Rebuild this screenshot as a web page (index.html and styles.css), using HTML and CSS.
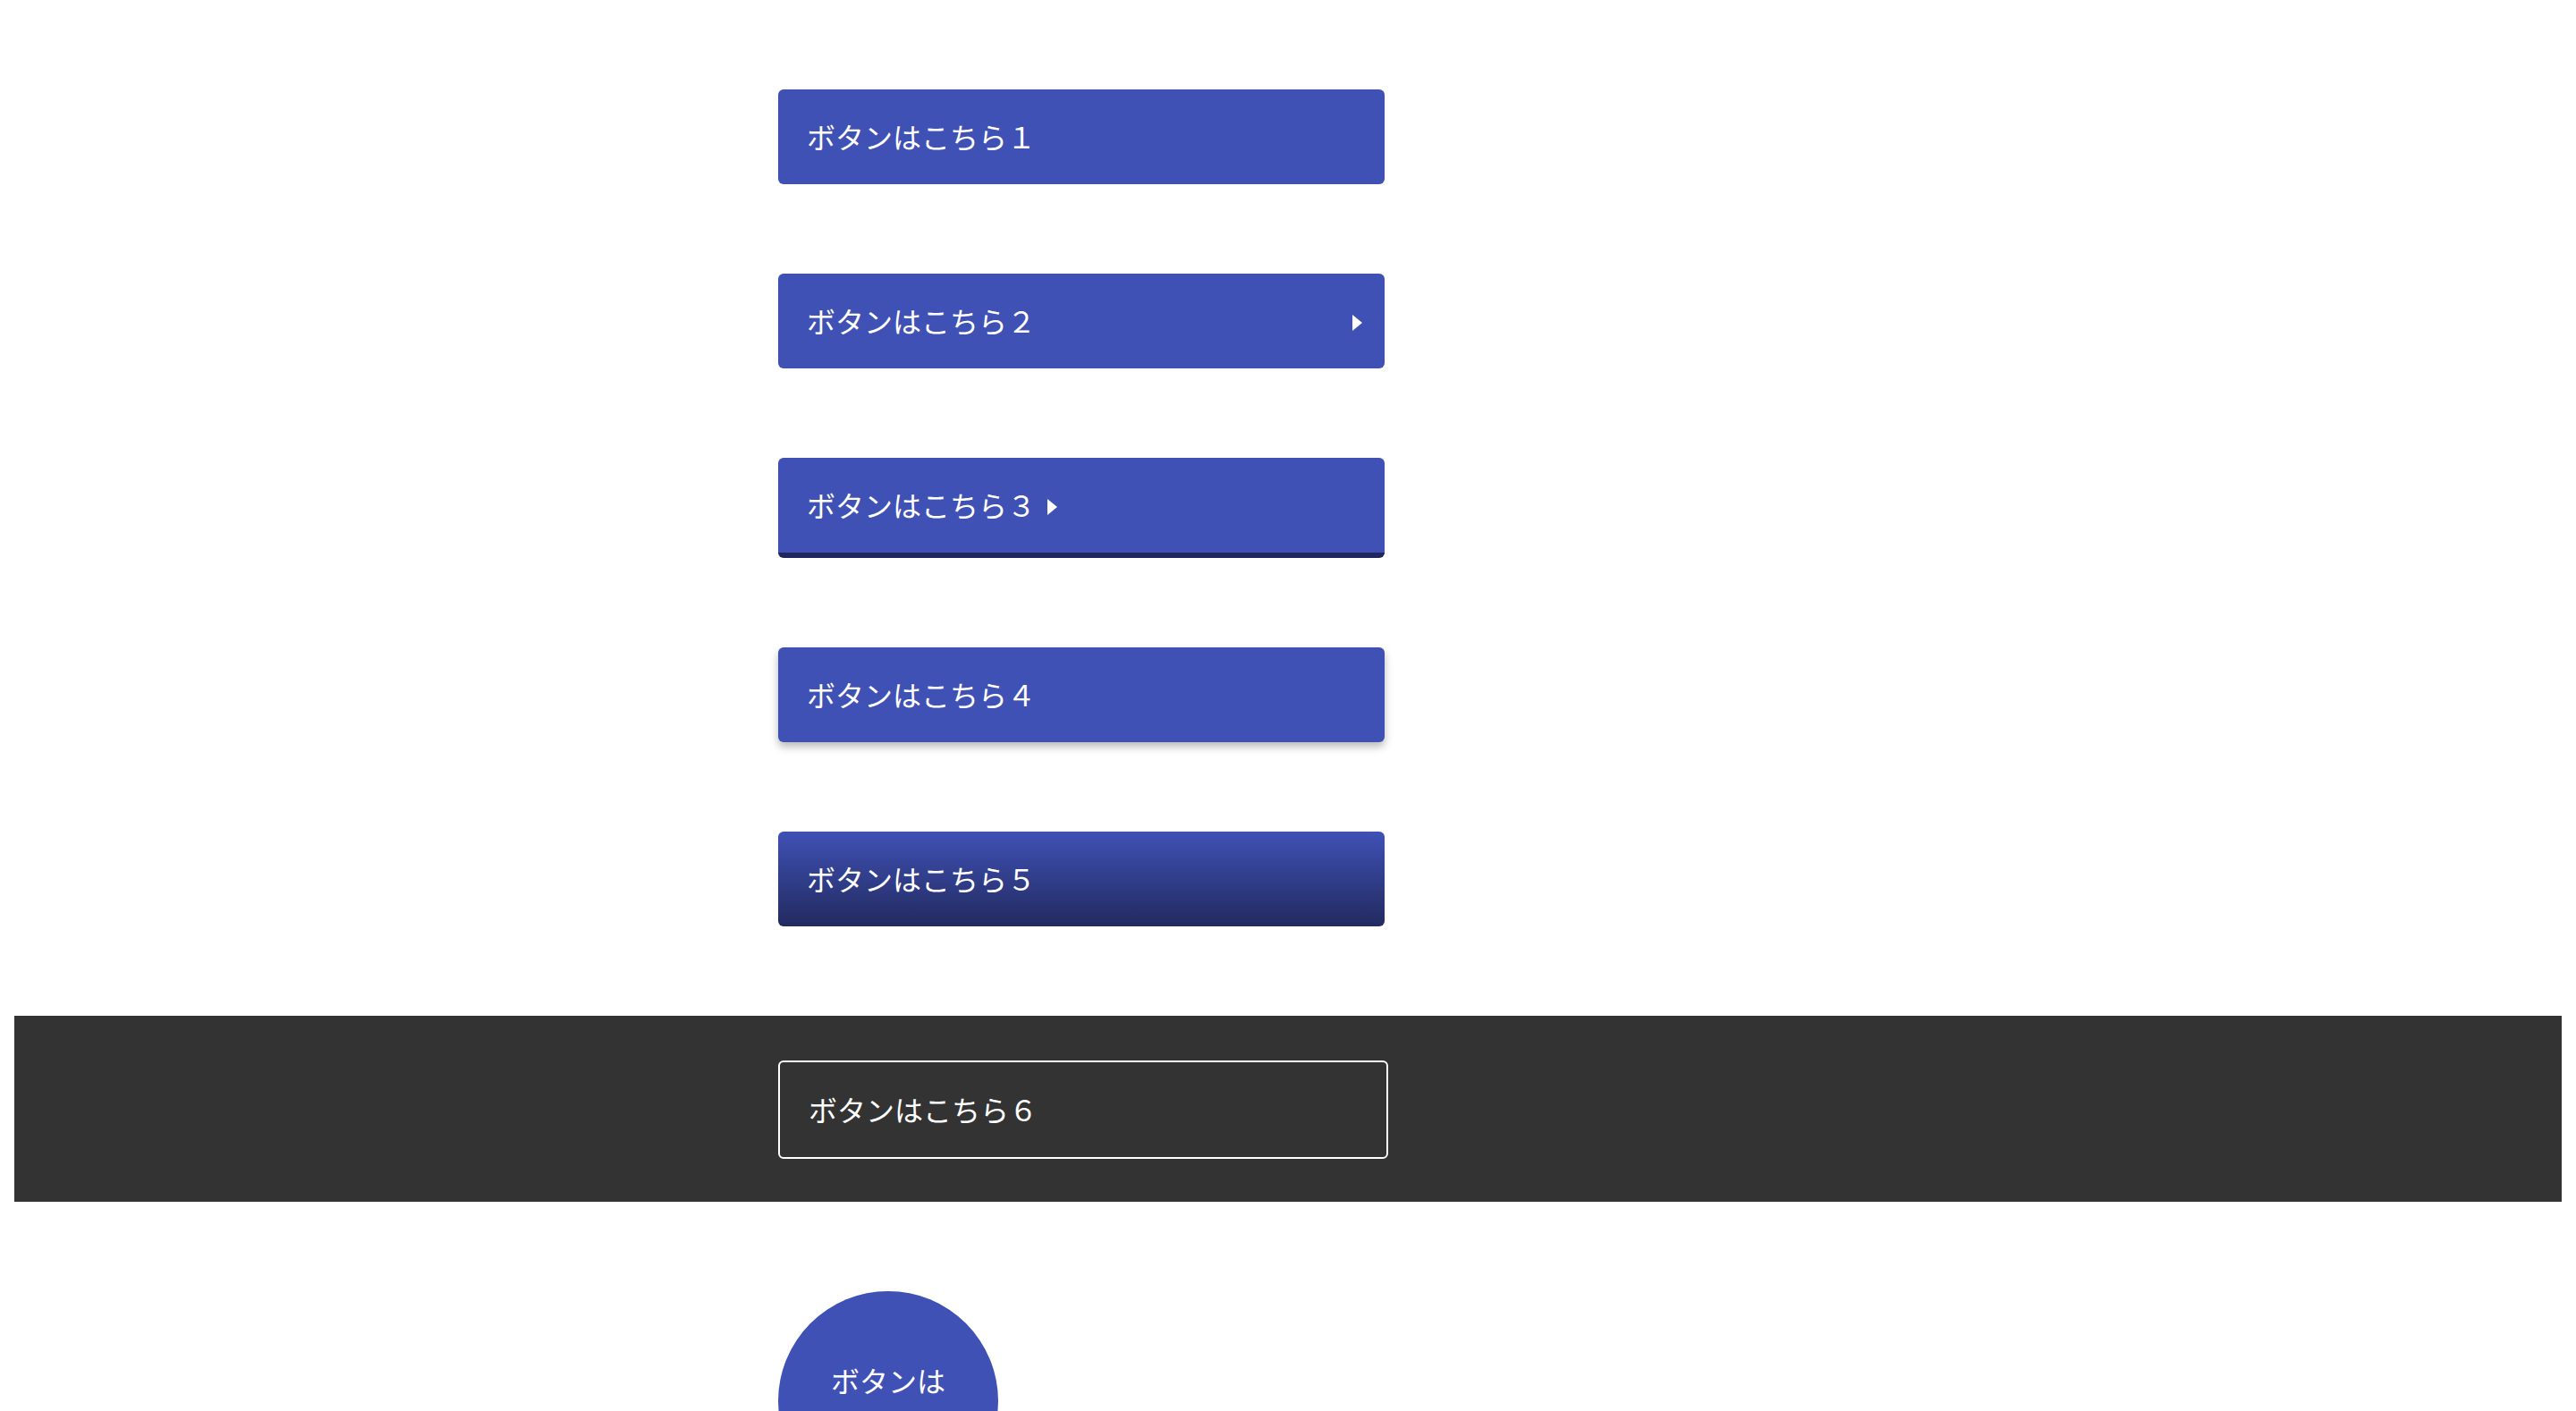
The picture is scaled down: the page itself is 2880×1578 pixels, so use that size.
FILE: index.html
```html
<!DOCTYPE html>
<html lang="ja">
<head>
<meta charset="utf-8">
<title>ボタン</title>
<link rel="stylesheet" href="styles.css">
</head>
<body>
<main class="page">
  <div class="row"><a class="btn" href="#">ボタンはこちら１</a></div>
  <div class="row"><a class="btn btn-arrow-right" href="#"><span class="label">ボタンはこちら２</span><span class="tri"></span></a></div>
  <div class="row"><a class="btn btn-border" href="#"><span class="label">ボタンはこちら３</span><span class="tri tri-inline"></span></a></div>
  <div class="row"><a class="btn btn-shadow" href="#">ボタンはこちら４</a></div>
  <div class="row"><a class="btn btn-gradient" href="#">ボタンはこちら５</a></div>
  <section class="dark">
    <div class="row"><a class="btn btn-outline" href="#">ボタンはこちら６</a></div>
  </section>
  <div class="row"><a class="btn-circle" href="#">ボタンはこちら７</a></div>
</main>
</body>
</html>
```

FILE: styles.css
```css
html, body {
  background: #fff;
}
body {
  margin: 0 16px;
  font-family: "Noto Sans CJK JP", "Noto Sans", sans-serif;
}
.page {
  display: flex;
  flex-direction: column;
  gap: 100px;
  padding-top: 100px;
}
.row {
  width: 1140px;
  margin: 0 auto;
}
.btn {
  box-sizing: border-box;
  display: flex;
  align-items: center;
  width: 678px;
  height: 106px;
  padding: 0 25px 3px 32px;
  background: #3f51b5;
  color: #fff;
  font-size: 32px;
  line-height: 1.5;
  border-radius: 6px;
  text-decoration: none;
}
.btn-arrow-right {
  justify-content: space-between;
}
.tri {
  width: 0;
  height: 0;
  margin-top: 6px;
  border-left: 11px solid #fff;
  border-top: 9px solid transparent;
  border-bottom: 9px solid transparent;
}
.tri-inline {
  margin-left: 13px;
}
.btn-border {
  height: 112px;
  border-bottom: 6px solid #1f275e;
}
.btn-shadow {
  box-shadow: 0 5px 10px rgba(0, 0, 0, 0.28);
}
.btn-gradient {
  background: linear-gradient(to bottom, #3f51b5 0%, #222a5f 100%);
}
.dark {
  background: #333333;
  padding: 50px 0 48px;
}
.btn-outline {
  width: 682px;
  height: 110px;
  background: transparent;
  border: 2px solid #fff;
  padding-left: 32px;
}
.btn-circle {
  box-sizing: border-box;
  display: flex;
  align-items: center;
  justify-content: center;
  text-align: center;
  width: 246px;
  height: 246px;
  padding: 0 48px;
  border-radius: 50%;
  background: #3f51b5;
  color: #fff;
  font-size: 32px;
  line-height: 1.5;
  text-decoration: none;
}
```
